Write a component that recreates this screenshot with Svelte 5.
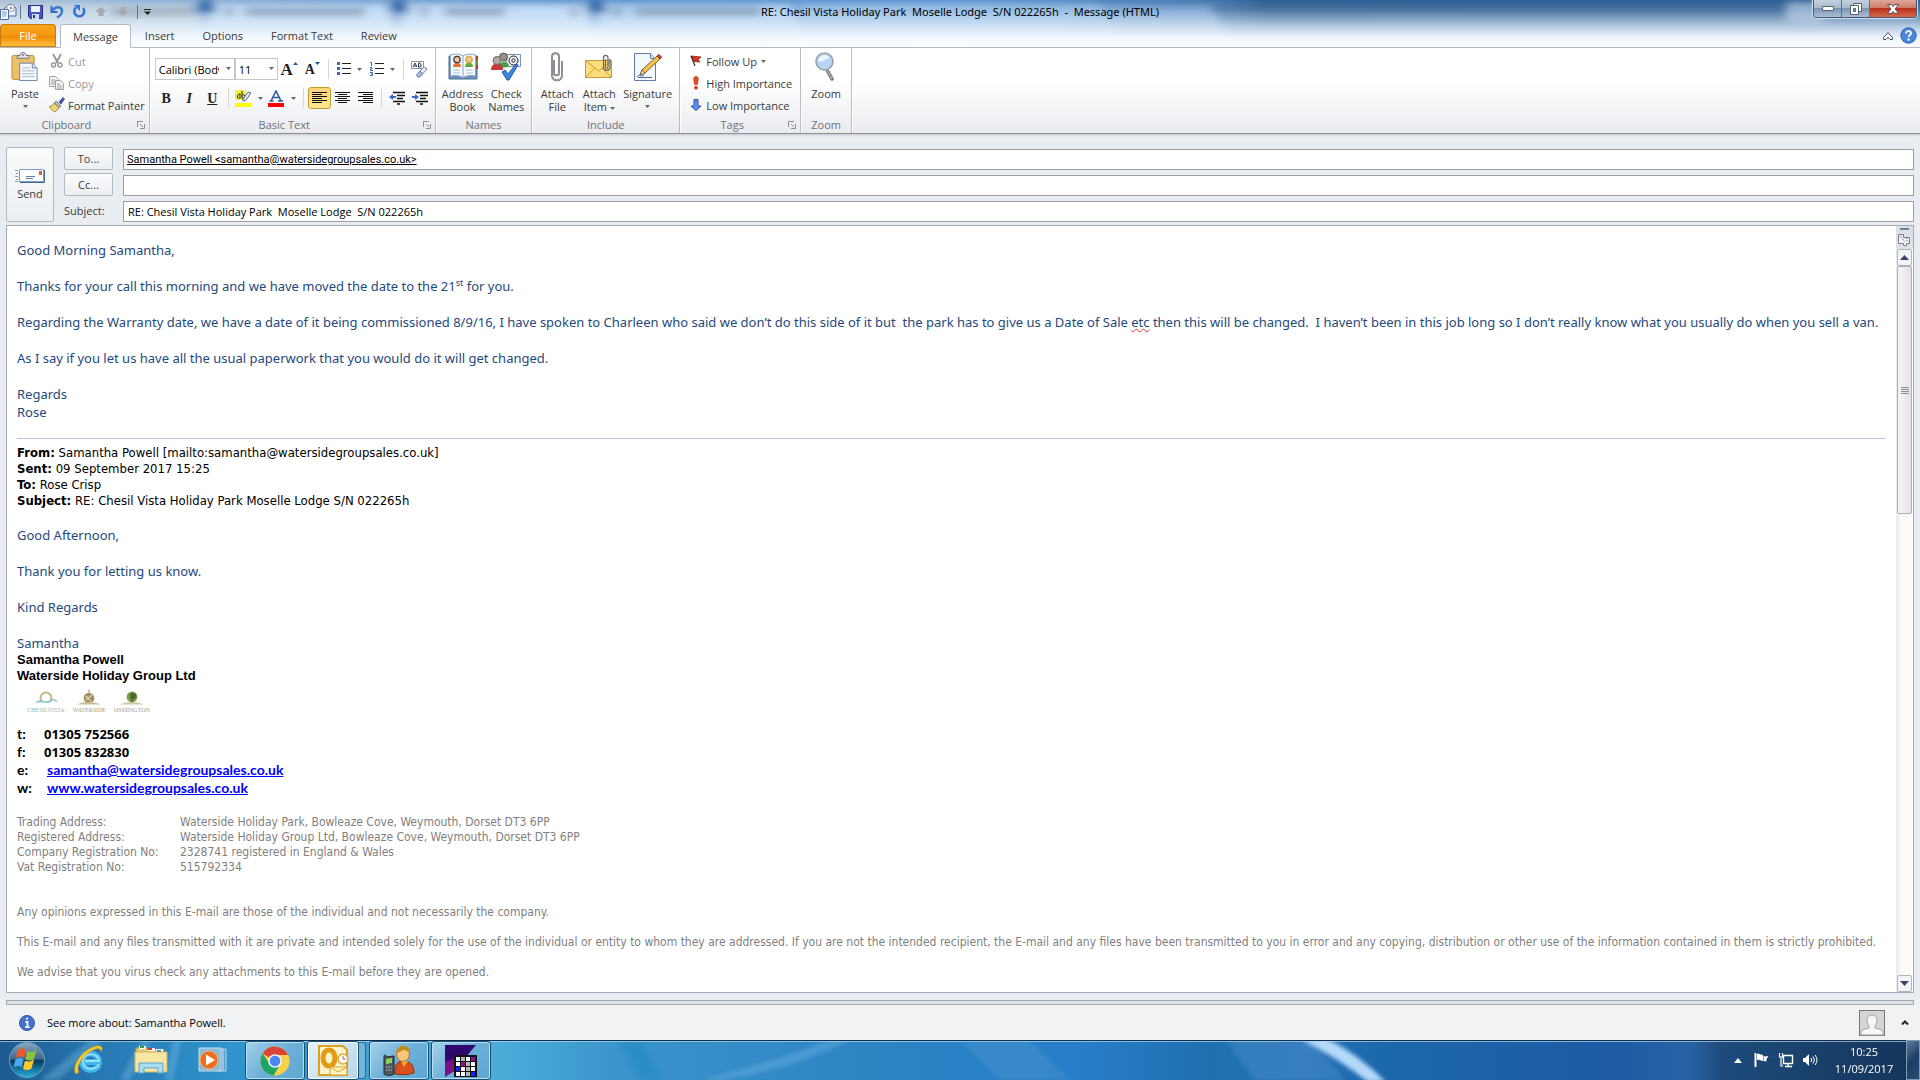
<script lang="ts">

  // Message Data:
  let font: string = $state('Calibri (Body)');
  let fontSize: string = $state('11');
  let to: string = $state('Samantha Powell <samantha@watersidegroupsales.co.uk>');
  let cc: string = $state('');
  let subject: string = $state('RE: Chesil Vista Holiday Park  Moselle Lodge  S/N 022265h');

  const tabs: string[] = ['Insert', 'Options', 'Format Text', 'Review'];

  const contacts = [
    { key: 't:', value: '01305 752566' },
    { key: 'f:', value: '01305 832830' },
    { key: 'e:', value: 'samantha@watersidegroupsales.co.uk', href: 'mailto:samantha@watersidegroupsales.co.uk' },
    { key: 'w:', value: 'www.watersidegroupsales.co.uk', href: 'http://www.watersidegroupsales.co.uk' },
  ];

  const company = [
    ['Trading Address:', 'Waterside Holiday Park, Bowleaze Cove, Weymouth, Dorset DT3 6PP'],
    ['Registered Address:', 'Waterside Holiday Group Ltd, Bowleaze Cove, Weymouth, Dorset DT3 6PP'],
    ['Company Registration No:', '2328741 registered in England & Wales'],
    ['Vat Registration No:', '515792334'],
  ];

</script>

<!-- #################################################################################################### -->

{#snippet arrow()}
  <svg class="arrow" width="5" height="3" viewBox="0 0 5 3"><path d="M0 0h5L2.5 3z" fill="#666" /></svg>
{/snippet}

{#snippet launcher()}
  <button class="launcher" aria-label="More options">
    <svg width="8" height="8" viewBox="0 0 8 8" fill="none" stroke="#8d929a"><path d="M.5 6V.5H6M3 3l3 3M7.5 3v4.5H3" /></svg>
  </button>
{/snippet}

{#snippet lines(widths: number[], align: string)}
  <svg width="15" height="14" viewBox="0 0 15 14" fill="#111">
    {#each widths as w, i}
      <rect x={align === 'left' ? 0 : align === 'right' ? 15 - w : (15 - w) / 2} y={i * 2 + 1} width={w} height="1" />
    {/each}
  </svg>
{/snippet}

<div class="window">

  <!-- Title Bar -->
  <header>
    <svg class="glass" viewBox="0 0 1920 48" preserveAspectRatio="none" aria-hidden="true">
      <defs>
        <linearGradient id="glassBase">
          <stop offset="0" stop-color="#a9bfd4" />
          <stop offset=".07" stop-color="#8fb2d6" />
          <stop offset=".3" stop-color="#5d92cd" />
          <stop offset=".5" stop-color="#5f96d2" />
          <stop offset=".63" stop-color="#4677ad" />
          <stop offset=".66" stop-color="#2c5c90" />
          <stop offset="1" stop-color="#2d5e94" />
        </linearGradient>
        <linearGradient id="glassFade" x2="0" y2="1">
          <stop offset="0" stop-color="#fff" stop-opacity="0" />
          <stop offset=".2" stop-color="#e2eefb" stop-opacity=".15" />
          <stop offset=".55" stop-color="#e6f1fc" stop-opacity=".72" />
          <stop offset=".8" stop-color="#f6faff" stop-opacity=".97" />
          <stop offset="1" stop-color="#fbfdff" />
        </linearGradient>
        <filter id="soft" x="-20%" y="-80%" width="140%" height="260%"><feGaussianBlur stdDeviation="5 3" /></filter>
      </defs>
      <rect width="1920" height="48" fill="url(#glassBase)" />
      <g filter="url(#soft)">
        <path d="M-10 4h200l16 34H-10z" fill="#bfd0df" />
        <path d="M215 4h170l14 34H203zM408 4h176l12 34H398z" fill="#b9d6f2" />
        <path d="M602 4h190l12 34H594z" fill="#a5c9ec" />
        <path d="M800 4h300l14 34H800z" fill="#9ec4ea" opacity=".7" />
        <path d="M1100 6h110l20 34h-130z" fill="#87aedb" opacity=".7" />
        <path d="M200 0h12l6 14h-22zM393 0h12l6 14h-22zM590 0h12l6 14h-22z" fill="#2c64a8" />
        <path d="M1786 2h38v20h-38z" fill="#86a6c8" />
        <path d="M225 13h8M245 13h120M420 13h8M445 13h60M570 13h8M612 13h10M635 13h125" stroke="#5f7a98" stroke-width="9" opacity=".7" />
        <path d="M110 13h85" stroke="#7c90a4" stroke-width="9" opacity=".7" />
      </g>
      <rect width="1920" height="48" fill="url(#glassFade)" />
    </svg>

    <div class="titleRow">
      <div class="quick">
        <svg width="17" height="17" viewBox="0 0 17 17">
          <path d="M4.500 5L10 1l6 4v8H5z" fill="#e8eef7" stroke="#4a6ea0" />
          <path d="M7 2h7v6H7z" fill="#fff" stroke="#8aa0bd" /><path d="M10 4h2v2h-2z" fill="#d7683c" />
          <path d="M.500 6.500h8v10h-8z" fill="#f7fafe" stroke="#4a6ea0" /><path d="M2 9h5M2 11h5M2 13h4" stroke="#7d9ac2" />
        </svg>
        <i class="bar"></i>
        <button aria-label="Save">
          <svg width="15" height="15" viewBox="0 0 15 15"><path d="M.5 1.500h14v13h-12l-2-2z" fill="#4a55c8" stroke="#26308a" /><path d="M3 2h9v6H3z" fill="#eef2fb" /><path d="M4 10h7v5H4z" fill="#d5dbea" /><path d="M5 11h2v3H5z" fill="#26308a" /></svg>
        </button>
        <button aria-label="Undo">
          <svg width="15" height="15" viewBox="0 0 15 15"><path d="M1.500 2v6h6" fill="none" stroke="#2f6cc4" stroke-width="2" /><path d="M2 7.500C5 2 12 2 12 7c0 3-2 5-5 6.500" fill="none" stroke="#3b7ad0" stroke-width="2.500" /></svg>
        </button>
        <button aria-label="Redo">
          <svg width="15" height="15" viewBox="0 0 15 15"><path d="M4 3.500A5 5 0 1 0 11 4" fill="none" stroke="#2f74d6" stroke-width="2.500" /><path d="M2 1h6v6z" fill="#2f74d6" /></svg>
        </button>
        <button aria-label="Previous item">
          <svg width="12" height="9" viewBox="0 0 12 9"><path d="M6 0l6 5H8.500v4h-5V5H0z" fill="#a6a9b0" /></svg>
        </button>
        <button aria-label="Next item">
          <svg width="12" height="9" viewBox="0 0 12 9"><path d="M6 9l6-5H8.500V0h-5v4H0z" fill="#a6a9b0" /></svg>
        </button>
        <i class="bar"></i>
        <button class="thin" aria-label="Customize toolbar">
          <svg width="7" height="6" viewBox="0 0 7 6"><path d="M0 0h7v1H0zM0 2.500h7L3.500 6z" fill="#222" /></svg>
        </button>
      </div>
      <h1>{subject}  -  Message (HTML)</h1>
      <div class="controls">
        <button aria-label="Minimize"><svg width="12" height="5" viewBox="0 0 12 5"><path d="M.5.500h11v4H.5z" fill="#fff" stroke="#5a6270" /></svg></button>
        <button aria-label="Restore"><svg width="12" height="12" viewBox="0 0 12 12" fill="#fff" stroke="#5a6270"><path d="M3.500.500h8v8h-8z" /><path d="M.5 2.500h8v9h-8z" /><path d="M3.500 5.500h2v3h-2z" fill="#7e93ac" /></svg></button>
        <button class="close" aria-label="Close"><svg width="12" height="10" viewBox="0 0 12 10"><path d="M.5.500h3.500L6 2.500 8 .500h3.500L8.200 5l3.300 4.500H8L6 7.500l-2 2H.500L3.800 5z" fill="#fff" stroke="#5b4a58" /></svg></button>
      </div>
    </div>

    <nav>
      <button class="file">File</button>
      <button class="active">Message</button>
      {#each tabs as tab}
        <button>{tab}</button>
      {/each}
      <span class="spacer"></span>
      <button class="help" aria-label="Minimize the ribbon"><svg width="10" height="8" viewBox="0 0 10 8"><path d="M.5 5.500L5 .700l4.500 4.800v2H7L5 5.200 3 7.500H.500z" fill="#fff" stroke="#444c58" /></svg></button>
      <button class="help" aria-label="Help">
        <svg width="17" height="17" viewBox="0 0 17 17"><circle cx="8.500" cy="8.500" r="7.700" fill="#4a86dc" stroke="#2a5cae" /><path d="M6 6.500c0-3.500 5.500-3 5 0-.3 1.500-2.300 1.700-2.300 3.500" fill="none" stroke="#fff" stroke-width="1.800" /><circle cx="8.600" cy="12.500" r="1.200" fill="#fff" /></svg>
      </button>
    </nav>
  </header>

  <!-- Ribbon -->
  <section class="ribbon">

    <div class="group">
      <div class="items">
        <button class="big paste">
          <svg width="28" height="31" viewBox="0 0 28 31">
            <rect x=".5" y="3.500" width="23" height="25" rx="2" fill="#ecc06a" stroke="#bd8c3a" />
            <path d="M6 6.500V3.500h3c0-4 6-4 6 0h3v3z" fill="#dfe2e7" stroke="#6f7681" /><circle cx="12" cy="3" r="1" fill="#6f7681" />
            <path d="M8.500 11.500h13l5 5v13h-18z" fill="#f6f9fd" stroke="#6b84ac" /><path d="M21.500 11.500v5h5" fill="#cfdcee" stroke="#6b84ac" />
            <path d="M11 16.500h8M11 19.500h13M11 22.500h13M11 25.500h13" stroke="#a3b6d2" />
          </svg>
          <span>Paste</span>{@render arrow()}
        </button>
        <div class="stack">
          <button class="small" disabled>
            <svg width="16" height="16" viewBox="0 0 16 16" fill="none" stroke="#999"><path d="M4 1l5 9M12 1L7 10" stroke-width="2" /><circle cx="4.500" cy="12" r="2" stroke-width="1.500" /><circle cx="11" cy="12" r="2" stroke-width="1.500" /></svg>Cut
          </button>
          <button class="small" disabled>
            <svg width="16" height="16" viewBox="0 0 16 16" fill="#f2f2f2" stroke="#a0a0a0"><path d="M.5 1.500h6l3 3v7h-9z" /><path d="M2 5h4M2 7h4M2 9h4" /><path d="M6.500 5.500h5l3 3v6h-8z" /><path d="M8 9h3M8 11h5M8 13h5" /></svg>Copy
          </button>
          <button class="small">
            <svg width="16" height="16" viewBox="0 0 16 16"><path d="M10 5l4-4.500 1.500 1.500L12 7z" fill="#4456c0" stroke="#2d3a80" stroke-width=".7" /><path d="M7 4l5 5-2 1.500L5.500 6z" fill="#bcc3cf" stroke="#555" stroke-width=".7" /><path d="M5 6l5 5-4 4C4 14 1 12 .500 9.500 3 9 4 8 5 6z" fill="#efd472" stroke="#90762a" stroke-width=".8" /></svg>Format Painter
          </button>
        </div>
      </div>
      <footer><span>Clipboard</span>{@render launcher()}</footer>
    </div>

    <div class="group">
      <div class="items format">
        <div class="tools">
          <label class="pick fontName">
            <select aria-label="Font" bind:value={font}><option>Calibri (Body)</option></select>{@render arrow()}
          </label>
          <label class="pick fontSize">
            <select aria-label="Font size" bind:value={fontSize}><option>11</option></select>{@render arrow()}
          </label>
          <button class="tool serif grow" aria-label="Grow font">A<svg width="5" height="3" viewBox="0 0 5 3"><path d="M0 3h5L2.500 0z" fill="#2a4f9c" /></svg></button>
          <button class="tool serif shrink" aria-label="Shrink font">A<svg width="5" height="3" viewBox="0 0 5 3"><path d="M0 0h5L2.500 3z" fill="#2a4f9c" /></svg></button>
          <i class="sep"></i>
          <button class="tool drop" aria-label="Bullets">
            <svg width="14" height="14" viewBox="0 0 14 14"><path d="M0 0h3v3H0zM0 5h3v3H0zM0 10h3v3H0z" fill="#4168ad" /><path d="M5 1h9v1H5zM5 6h9v1H5zM5 11h9v1H5z" fill="#222" /></svg>{@render arrow()}
          </button>
          <button class="tool drop" aria-label="Numbering">
            <svg width="14" height="14" viewBox="0 0 14 14"><path d="M0 .500h1.500V4M0 5.500h2V7H.500v1.500H3M0 10.500h2.500v3H0M1 12h1" fill="none" stroke="#4168ad" /><path d="M5 1h9v1H5zM5 6h9v1H5zM5 11h9v1H5z" fill="#222" /></svg>{@render arrow()}
          </button>
          <i class="sep"></i>
          <button class="tool" aria-label="Clear formatting">
            <svg width="17" height="17" viewBox="0 0 17 17"><path d="M.5.500h12v7H.500z" fill="#fff" stroke="#8592a8" /><path d="M2 6l2-4 2 4M3 5h2M7.500 2v4H9c2 0 1.500-2 0-2 1.500 0 1-2-.500-2z" fill="none" stroke="#26334e" /><path d="M9 10l4-4 3 2-4.500 5z" fill="#e6edf8" stroke="#6d82ab" /><path d="M9 10l2.500 3L9 16H6.500L5.500 14z" fill="#a9bde0" stroke="#6d82ab" /></svg>
          </button>
        </div>
        <div class="tools">
          <button class="tool serif"><b>B</b></button>
          <button class="tool serif"><em>I</em></button>
          <button class="tool serif"><u>U</u></button>
          <i class="sep"></i>
          <button class="tool drop" aria-label="Highlight colour">
            <svg width="17" height="17" viewBox="0 0 17 17"><path d="M0 0h11v10H0z" fill="#f4f04a" /><path d="M5 4.500c-3-2-4 5-.500 3.500M5 3.500V8.500M7 1v7.500M7 5c4-2 3 5 0 3" fill="none" stroke="#222" /><path d="M8 9l5-7 3 1-5 7-3 1z" fill="#dfe6f2" stroke="#5b6f95" /><path d="M0 13h16v4H0z" fill="#ffff00" /></svg>{@render arrow()}
          </button>
          <button class="tool drop" aria-label="Font colour">
            <svg width="17" height="17" viewBox="0 0 17 17"><path d="M3 11L8 1l5 10M5 7.500h6M1.500 11h4M10 11h5" fill="none" stroke="#355a9f" stroke-width="1.600" /><path d="M0 13h16v4H0z" fill="#f00" /></svg>{@render arrow()}
          </button>
          <i class="sep"></i>
          <button class="tool on" aria-label="Align left">{@render lines([15, 10, 15, 10, 15, 10], 'left')}</button>
          <button class="tool" aria-label="Centre">{@render lines([15, 9, 15, 9, 15, 9], 'center')}</button>
          <button class="tool" aria-label="Align right">{@render lines([15, 10, 15, 10, 15, 10], 'right')}</button>
          <i class="sep"></i>
          <button class="tool" aria-label="Decrease indent">
            <svg width="16" height="14" viewBox="0 0 16 14"><path d="M4 1.500h12M8 4.500h8M8 7.500h6M4 10.500h12M8 13h3" stroke="#111" stroke-width="1.300" /><path d="M0 6l4-3v2h3v2H4v2z" fill="#3568c4" /></svg>
          </button>
          <button class="tool" aria-label="Increase indent">
            <svg width="16" height="14" viewBox="0 0 16 14"><path d="M4 1.500h12M8 4.500h8M8 7.500h6M4 10.500h12M8 13h3" stroke="#111" stroke-width="1.300" /><path d="M7 6L3 3v2H0v2h3v2z" fill="#3568c4" /></svg>
          </button>
        </div>
      </div>
      <footer><span>Basic Text</span>{@render launcher()}</footer>
    </div>

    <div class="group">
      <div class="items">
        <button class="big">
          <svg width="30" height="30" viewBox="0 0 30 30">
            <path d="M1 4h28v23H1z" fill="#6f91be" stroke="#4b6a96" /><path d="M2.500 3C7 1.500 12 2 15 4c3-2 8-2.500 12.500-1v21C23 23 18 23.500 15 25.500 12 23.500 7 23 2.500 24z" fill="#f7fafe" stroke="#8ba3c4" /><path d="M15 4v21" stroke="#8ba3c4" />
            <path d="M29 4v4M29 13v4" stroke="#c0392b" stroke-width="2" /><path d="M29 8v5" stroke="#5a9e3e" stroke-width="2" />
            <path d="M5 15c0-6 8-6 8 0z" fill="#e8742c" /><circle cx="9" cy="7.500" r="3.200" fill="#f3c49b" stroke="#3c3c3c" stroke-width="1.300" />
            <path d="M17 15c0-6 8-6 8 0z" fill="#5cae3b" /><circle cx="21" cy="7.500" r="3.200" fill="#f3c49b" stroke="#d2a83a" stroke-width="1.300" />
            <path d="M5 18h7M5 21h7M18 18h7M18 21h7" stroke="#a9bcd8" />
          </svg>
          <span>Address<br>Book</span>
        </button>
        <button class="big">
          <svg width="30" height="30" viewBox="0 0 30 30">
            <path d="M15.500 2.500h14v12h-14z" fill="#eef3fa" stroke="#7e95b8" /><circle cx="22.500" cy="8.500" r="4.500" fill="none" stroke="#222" /><circle cx="22.500" cy="8.500" r="1.700" fill="none" stroke="#222" />
            <path d="M8 16c0-8 10-8 10-1z" fill="#43a046" /><circle cx="12.500" cy="5" r="4" fill="#9a8f88" stroke="#555" />
            <path d="M0 18c0-9 12-9 12 0z" fill="#c8373c" /><circle cx="6" cy="8.500" r="4" fill="#b7aaa2" stroke="#666" />
            <path d="M11 20l3-2 3 4 8-10 2 1-9 15h-2z" fill="#3f86e0" stroke="#1f5cb0" />
          </svg>
          <span>Check<br>Names</span>
        </button>
      </div>
      <footer><span>Names</span></footer>
    </div>

    <div class="group">
      <div class="items include">
        <button class="big">
          <svg width="14" height="30" viewBox="0 0 14 30"><path d="M4 8v13c0 3 5 3 5 0V5c0-5-7-5-7 0v18c0 7 10 7 10 0V9" fill="none" stroke="#666c74" stroke-width="2" /><path d="M4 8v13c0 3 5 3 5 0V5c0-5-7-5-7 0v18c0 7 10 7 10 0V9" fill="none" stroke="#e2e5e9" stroke-width=".6" /></svg>
          <span>Attach<br>File</span>
        </button>
        <button class="big">
          <svg width="28" height="30" viewBox="0 0 28 30"><path d="M.5 8.500h26v17H.500z" fill="#fbdd7b" stroke="#c99a3b" /><path d="M1 9l12.500 10L26 9M1 25l9-9M26 25l-9-9" fill="none" stroke="#c99a3b" /><path d="M20.500 7v8c0 2 2.500 2 2.500 0V6c0-3.500-4.500-3.500-4.500 0v9c0 4.500 6.500 4.500 6.500 0V7" fill="none" stroke="#5f6874" stroke-width="1.200" /></svg>
          <span>Attach<br>Item {@render arrow()}</span>
        </button>
        <button class="big">
          <svg width="30" height="30" viewBox="0 0 30 30"><path d="M1.500 1.500h16l5 5v22h-21z" fill="#f4f8fd" stroke="#5d7cab" /><path d="M17.500 1.500v5h5" fill="#d4e0f0" stroke="#5d7cab" /><path d="M4 25c3-4 4 1 7-2M5 25.500h14" fill="none" stroke="#4a6aa0" /><path d="M7 23l2-5L24 4l3 3-15 14z" fill="#f6c14a" stroke="#7c6232" /><path d="M7 23l2-5 3 3z" fill="#f2dfc0" stroke="#5c4a2a" stroke-width=".7" /><path d="M24 4l2-1.500L28.500 5 27 7z" fill="#d2453c" stroke="#8d2f2a" /></svg>
          <span>Signature</span>{@render arrow()}
        </button>
      </div>
      <footer><span>Include</span></footer>
    </div>

    <div class="group">
      <div class="items">
        <div class="stack tags">
          <button class="small"><svg width="12" height="12" viewBox="0 0 12 12"><path d="M1 1l10 1-3 2.500L10 7 4 6.500z" fill="#d8341f" stroke="#8e1f12" stroke-width=".8" /><path d="M1 1l4 10" stroke="#333" stroke-width="1.200" /></svg>Follow Up {@render arrow()}</button>
          <button class="small"><svg width="12" height="14" viewBox="0 0 12 14"><path d="M6 .500c3 0 2.500 2.500 1.500 8h-3C3.500 3 3 .500 6 .500z" fill="#ea4a22" stroke="#b23113" stroke-width=".6" /><circle cx="6" cy="11.700" r="1.900" fill="#e2401c" /></svg>High Importance</button>
          <button class="small"><svg width="12" height="12" viewBox="0 0 12 12"><path d="M4 .500h4V7h3l-5 4.500L1 7h3z" fill="#5f8ff0" stroke="#2a4fae" /></svg>Low Importance</button>
        </div>
      </div>
      <footer><span>Tags</span>{@render launcher()}</footer>
    </div>

    <div class="group">
      <div class="items">
        <button class="big">
          <svg width="22" height="30" viewBox="0 0 22 30"><path d="M12 18l5 9" stroke="#6d7278" stroke-width="3.500" stroke-linecap="round" /><path d="M12 18l5 9" stroke="#b9bec4" stroke-width="1.200" /><circle cx="9.500" cy="9.500" r="8.500" fill="#b9d5f5" stroke="#9ba1a9" stroke-width="1.600" /><path d="M3 9c1-6 9-8 12-3-4 0-7 5-12 3z" fill="#eef6ff" /></svg>
          <span>Zoom</span>
        </button>
      </div>
      <footer><span>Zoom</span></footer>
    </div>

  </section>

  <!-- Address Fields -->
  <form class="fields" onsubmit={(e) => e.preventDefault()}>
    <button class="send">
      <svg width="30" height="14" viewBox="0 0 30 14"><path d="M4.500.500h24v12h-24z" fill="#fff" stroke="#7d9cc6" /><path d="M5 13.500h24.500V1" fill="none" stroke="#46668f" /><path d="M24 2h3v4h-3z" fill="#e25b3c" /><path d="M11 7.500h9M11 9.500h7" stroke="#5b7bb0" /><path d="M0 1.500h3M1 4.500h2M0 7.500h3M1 10.500h2M0 12.500h3" stroke="#8a9dbb" /></svg>
      Send
    </button>
    <button id="toLabel" type="button" class="who">To...</button>
    <input class="recipient" aria-labelledby="toLabel" bind:value={to} spellcheck="false">
    <button id="ccLabel" type="button" class="who">Cc...</button>
    <input aria-labelledby="ccLabel" bind:value={cc}>
    <label for="subject">Subject:</label>
    <input id="subject" bind:value={subject} spellcheck="false">
  </form>

  <!-- Message Body -->
  <main>
    <article>
      <div class="reply">
        <p>Good Morning Samantha,</p>
        <p>Thanks for your call this morning and we have moved the date to the 21<sup>st</sup> for you.</p>
        <p>Regarding the Warranty date, we have a date of it being commissioned 8/9/16, I have spoken to Charleen who said we don’t do this side of it but &nbsp;the park has to give us a Date of Sale <span class="typo">etc</span> then this will be changed. &nbsp;I haven’t been in this job long so I don’t really know what you usually do when you sell a van.</p>
        <p>As I say if you let us have all the usual paperwork that you would do it will get changed.</p>
        <p>Regards<br>Rose</p>
      </div>

      <div class="quoted">
        <b>From:</b> Samantha Powell [mailto:samantha@watersidegroupsales.co.uk]<br>
        <b>Sent:</b> 09 September 2017 15:25<br>
        <b>To:</b> Rose Crisp<br>
        <b>Subject:</b> RE: Chesil Vista Holiday Park Moselle Lodge S/N 022265h
      </div>

      <div class="reply">
        <p>Good Afternoon,</p>
        <p>Thank you for letting us know.</p>
        <p>Kind Regards</p>
        <p>Samantha</p>
      </div>

      <div class="sender">Samantha Powell<br>Waterside Holiday Group Ltd</div>

      <!-- Park Logos -->
      <div class="logos">
        <figure class="chesil">
          <svg width="28" height="17" viewBox="0 0 26 15" fill="none"><path d="M9 11a5 5 0 1 1 8 0" stroke="#c9b785" stroke-width="2" /><path d="M4 12c5-3 9 2 13-1 3-3 4-1 6 0" stroke="#86c2cc" stroke-width="1.500" /></svg>
          <figcaption>CHESILVISTA</figcaption>
        </figure>
        <figure>
          <svg width="28" height="17" viewBox="0 0 26 15"><path d="M13 0v3" stroke="#a58f63" /><circle cx="13" cy="8" r="5" fill="#a58f63" /><path d="M10 10l6-5M10 6l5 5" stroke="#e9e0cb" /><path d="M2 14c7-3 14-3 22 0z" fill="#cbbd98" /></svg>
          <figcaption>WATERSIDE</figcaption>
        </figure>
        <figure>
          <svg width="28" height="17" viewBox="0 0 26 15"><circle cx="13" cy="7" r="5" fill="#7d9a4e" /><circle cx="14" cy="6" r="3" fill="#4c6d2c" /><path d="M13 7v6" stroke="#5a4a2c" /><path d="M2 14c7-3 14-3 22 0z" fill="#cfc6a2" /></svg>
          <figcaption>OSMINGTON</figcaption>
        </figure>
      </div>

      <dl class="contacts">
        {#each contacts as { key, value, href }}
          <dt>{key}</dt>
          <dd>{#if href}<a {href}>{value}</a>{:else}<span>{value}</span>{/if}</dd>
        {/each}
      </dl>

      <dl class="company">
        {#each company as [key, value]}
          <dt>{key}</dt>
          <dd>{value}</dd>
        {/each}
      </dl>

      <div class="legal">
        <p>Any opinions expressed in this E-mail are those of the individual and not necessarily the company.</p>
        <p>This E-mail and any files transmitted with it are private and intended solely for the use of the individual or entity to whom they are addressed. If you are not the intended recipient, the E-mail and any files have been transmitted to you in error and any copying, distribution or other use of the information contained in them is strictly prohibited.</p>
        <p>We advise that you virus check any attachments to this E-mail before they are opened.</p>
      </div>
    </article>

    <div class="scrollbar">
      <div class="split">
        <svg width="14" height="18" viewBox="0 0 14 18"><path d="M2 0h9v2H2z" fill="#777f8c" /><path d="M.5 6.500h5v3h6v6h-3v2h-3v-2h-5z" fill="#f4f5f7" stroke="#777f8c" /><path d="M2 8l5 6M9 10v3" stroke="#555" stroke-dasharray="1" /></svg>
      </div>
      <button aria-label="Scroll up"><svg width="9" height="5" viewBox="0 0 9 5"><path d="M0 5h9L4.500 0z" fill="#3a4468" /></svg></button>
      <div class="track">
        <div class="thumb"><svg width="8" height="7" viewBox="0 0 8 7"><path d="M0 .500h8M0 2.500h8M0 4.500h8M0 6.500h8" stroke="#8b8f95" /></svg></div>
      </div>
      <button aria-label="Scroll down"><svg width="9" height="5" viewBox="0 0 9 5"><path d="M0 0h9L4.500 5z" fill="#3a4468" /></svg></button>
    </div>
  </main>

  <!-- People Pane -->
  <aside>
    <div class="splitter"></div>
    <div class="people">
      <svg width="16" height="16" viewBox="0 0 16 16"><circle cx="8" cy="8" r="7.500" fill="#4573cc" stroke="#3158a8" /><path d="M8 2.800v2M6.500 7H8.500v5M6 12.200h4.500" stroke="#fff" stroke-width="1.800" fill="none" /></svg>
      <span>See more about: Samantha Powell.</span>
      <svg class="avatar" width="26" height="26" viewBox="0 0 26 26"><rect x=".5" y=".5" width="25" height="25" fill="#d5d5d7" stroke="#777" /><path d="M2 25v-3c1-3 5-3 8-4v-2c-3-4-3-11 3-11s6 7 3 11v2c3 1 7 1 8 4v3z" fill="#f7f7f8" stroke="#a2a2a6" /></svg>
      <button aria-label="Expand"><svg width="8" height="5" viewBox="0 0 8 5"><path d="M1 4.500l3-3 3 3" fill="none" stroke="#222" stroke-width="2" /></svg></button>
    </div>
  </aside>

  <!-- Taskbar -->
  <div class="taskbar">
    <svg class="glass" viewBox="0 0 1920 40" preserveAspectRatio="none" aria-hidden="true">
      <defs>
        <linearGradient id="taskBase">
          <stop offset="0" stop-color="#1c5a90" />
          <stop offset=".05" stop-color="#2777b2" />
          <stop offset=".12" stop-color="#2f93cc" />
          <stop offset=".255" stop-color="#4cadda" />
          <stop offset=".33" stop-color="#3992ca" />
          <stop offset=".45" stop-color="#2d85c4" />
          <stop offset=".56" stop-color="#277ec8" />
          <stop offset=".63" stop-color="#1f70b1" />
          <stop offset=".68" stop-color="#2873b8" />
          <stop offset=".72" stop-color="#1b67ac" />
          <stop offset=".84" stop-color="#1d5ba5" />
          <stop offset=".88" stop-color="#2862a4" />
          <stop offset=".897" stop-color="#1e4b7c" />
          <stop offset="1" stop-color="#143459" />
        </linearGradient>
        <filter id="soften"><feGaussianBlur stdDeviation="2" /></filter>
      </defs>
      <rect width="1920" height="40" fill="url(#taskBase)" />
      <g filter="url(#soften)">
        <path d="M40 40L90 0h14L58 40zM120 40L142 0h10L130 40zM165 40l8-40h8l-8 40z" fill="#8dd0ea" opacity=".3" />
        <path d="M617 0l25 40h20L640 0z" fill="#1f86bd" opacity=".4" /><path d="M700 40Q780 20 830 0h20Q790 30 720 40z" fill="#8cc8ee" opacity=".3" />
        <path d="M960 0l40 40h70L1030 0zM1225 0l30 40h90L1310 0z" fill="#62a5dc" opacity=".25" />
        <path d="M1302 0q36 18 66 42h18Q1358 14 1326-2z" fill="#b4d9fa" />
      </g>
      <path d="M0 .500h1920" stroke="#0c2f50" /><path d="M0 1.500h1920" stroke="#c4e2f4" opacity=".65" />
    </svg>

    <button class="orb" aria-label="Start">
      <svg width="38" height="38" viewBox="0 0 38 38">
        <defs><linearGradient id="orb" x2="0" y2="1"><stop offset="0" stop-color="#8fa9bd" /><stop offset=".48" stop-color="#3b6488" /><stop offset=".5" stop-color="#0b3557" /><stop offset="1" stop-color="#25b1dc" /></linearGradient></defs>
        <circle cx="19" cy="19" r="17.500" fill="url(#orb)" stroke="#6d9fc0" />
        <path d="M10 9c3-2 6-2 8 0l-2 8c-2-2-5-2-8 0z" fill="#ef5a28" /><path d="M19.500 10c3 2 6 1 9-1l-2.500 9c-3 2-6 2-8.500 0z" fill="#8bc53f" />
        <path d="M7.500 18.500c3-2 6-2 8 0l-2 8c-2-2-5-2-8 0z" fill="#4aa8ec" /><path d="M17 19.500c3 2 6 1 9-1l-2.500 9c-3 2-6 2-8.500 0z" fill="#fcc92c" />
      </svg>
    </button>
    <button class="pin" aria-label="Internet Explorer">
      <svg width="32" height="32" viewBox="0 0 32 32"><path d="M26 21c-3 7-17 7-17-4 0-10 17-10 17 1H11" fill="none" stroke="#3fb5ee" stroke-width="6" /><path d="M26 20c-3 7-16 7-16-3 0-9 16-9 16 0H12" fill="none" stroke="#9be0fa" stroke-width="2" /><path d="M3 30c-5-6 4-22 17-27 8-3 11 0 8 5 0-4-3-4-8-2C10 11 2 23 6 28z" fill="#f6c92f" stroke="#cb9414" stroke-width=".6" /></svg>
    </button>
    <button class="pin" aria-label="Windows Explorer">
      <svg width="34" height="30" viewBox="0 0 34 30"><path d="M2 3h10l2 2h16v19H2z" fill="#e7cb79" stroke="#b2913f" /><path d="M5 1h7v3H5zM14 3h7v3h-7zM22 4h7v3h-7z" fill="#fff" /><path d="M6 1h4v2H6z" fill="#3a9b45" /><path d="M14 3h4v2h-4z" fill="#d23b2d" /><path d="M23 5h4v2h-4z" fill="#3c7fd0" /><path d="M1 7h32v20H1z" fill="#f8e7a4" stroke="#cfb05c" /><path d="M5 28V18h24v10h-5v-5H10v5z" fill="#a8dcf2" stroke="#5aa5cc" /></svg>
    </button>
    <button class="pin" aria-label="Media Player">
      <svg width="30" height="26" viewBox="0 0 30 26"><path d="M20 2h8v22h-8z" fill="#5b9cc6" stroke="#b5d9ee" /><path d="M1 1h22v23H1z" fill="#8abbd9" stroke="#c3dfee" /><path d="M25 2v22" stroke="#d3e9f5" /><circle cx="11" cy="13" r="9" fill="#ee6c1c" stroke="#f9b37c" /><path d="M8 7.500v11l9-5.500z" fill="#fff" /></svg>
    </button>
    <button class="task" aria-label="Chrome">
      <svg width="30" height="30" viewBox="0 0 30 30"><circle cx="15" cy="15" r="14.500" fill="#fbd04b" /><path d="M15 15L2.500 7.500A14.500 14.500 0 0 1 28 9H15z" fill="#da4437" /><path d="M15 15l-1 14.500A14.500 14.500 0 0 1 2.500 7.500L10 18z" fill="#1fa463" /><path d="M13.500 29.500L20 19l-5 2-4-2z" fill="#1fa463" /><circle cx="15" cy="15" r="6.800" fill="#fff" /><circle cx="15" cy="15" r="5.400" fill="#4a87f0" /></svg>
    </button>
    <button class="task lit" aria-label="Outlook">
      <svg width="32" height="32" viewBox="0 0 32 32"><path d="M2 1h24l4 4v25H2z" fill="#fdf3cd" stroke="#d9a11e" stroke-width="2" /><ellipse cx="12" cy="13" rx="6" ry="8" fill="none" stroke="#e39a16" stroke-width="5" /><path d="M13 22h17v8H13z" fill="#fff3c4" stroke="#d9a11e" /><path d="M13 22l8 5 9-5" fill="none" stroke="#d9a11e" /><circle cx="26" cy="14" r="5" fill="#fff" stroke="#e0a838" stroke-width="1.500" /><path d="M26 11v3h3" fill="none" stroke="#a9741a" /></svg>
    </button>
    <i class="pile"></i>
    <button class="task" aria-label="Communicator">
      <svg width="32" height="32" viewBox="0 0 32 32"><path d="M12 29c-1-12 5-13 9-13s10 2 10 12c-6 2-14 2-19 1z" fill="#d9501e" stroke="#8f300e" /><path d="M18 16l3 6 4-6z" fill="#f2b23c" /><ellipse cx="20" cy="9" rx="6.500" ry="7.500" fill="#f6c67e" stroke="#a77a1f" /><path d="M13.500 8C13-1 27-2 27 8c-3-1-4-3-6-3s-4 2-7.500 3z" fill="#c08c1d" /><path d="M1 13c0-2 0-3 1-3s1 1 1 2l8-1v18c-3 2-7 2-10 0z" fill="#4f585e" stroke="#23292d" /><path d="M3 14l6-1v5l-6 1z" fill="#86d65e" /><path d="M3 22h6M3 25h6" stroke="#b9c1c6" stroke-dasharray="1.500 1" /></svg>
    </button>
    <button class="task" aria-label="Terminal">
      <svg width="32" height="32" viewBox="0 0 32 32"><path d="M0 0h31L20 13 0 20z" fill="#30066f" /><path d="M0 17l11-4v12L0 32z" fill="#7a0f86" /><path d="M9 10h23v22H9z" fill="#111" /><path d="M11 12h4v4h-4zM21 12h4v4h-4zM11 17h4v4h-4zM26 17h4v4h-4zM16 22h4v4h-4zM11 27h4v4h-4zM16 27h4v4h-4zM26 22h4v4h-4z" fill="#fff" /><path d="M16 12h4v4h-4zM21 17h4v4h-4zM21 22h4v4h-4zM21 27h4v4h-4z" fill="#b5b5b5" /><path d="M26 12h4v4h-4zM16 17h4v4h-4z" fill="#8a138f" /><path d="M11 22h4v4h-4zM26 27h4v4h-4z" fill="#1720ee" /></svg>
    </button>

    <span class="spacer"></span>

    <div class="tray">
      <button aria-label="Show hidden icons"><svg width="8" height="5" viewBox="0 0 8 5"><path d="M0 5h8L4 0z" fill="#fff" /></svg></button>
      <button aria-label="Action centre"><svg width="16" height="16" viewBox="0 0 16 16"><path d="M1.500 1v14" stroke="#fff" stroke-width="2" /><path d="M3 2c3-1 4 1 6 1v6C7 9 6 7 3 8zM9.500 4c2 1 3 0 5 0l-2 3v2c-1 1-2 0-3 0z" fill="#fff" /></svg></button>
      <button aria-label="Network"><svg width="16" height="16" viewBox="0 0 16 16" fill="none" stroke="#fff"><path d="M5.500 3.500h9v8h-9zM7 14.500h7M10 12v2" stroke-width="1.400" /><path d="M1.500 1v4h3V1M3 5v9h2" stroke-width="1.200" /></svg></button>
      <button aria-label="Volume"><svg width="16" height="16" viewBox="0 0 16 16"><path d="M1 6h2l4-4v12L3 10H1z" fill="#fff" /><path d="M9 6q1.500 2 0 4M11 4.500q3 3.500 0 7M13 3q4 5 0 10" fill="none" stroke="#fff" /></svg></button>
      <time datetime="2017-09-11T10:25">10:25<br>11/09/2017</time>
      <button class="desktop" aria-label="Show desktop"></button>
    </div>
  </div>

</div>

<!-- #################################################################################################### -->

<style>

  :global(body) {
    margin: 0;
  }

  .window {
    display: flex;
    flex-direction: column;
    min-height: 100vh;
    font-family: "Open Sans", "Noto Sans", sans-serif;
    font-size: 11px;
    line-height: 13px;
    color: #3b3b3b;
    background: #e9ecf0;
  }

  button, input, select {
    box-sizing: border-box;
    margin: 0;
    padding: 0;
    font: inherit;
    color: inherit;
    background: none;
    border: 0;
    border-radius: 0;
  }

  svg {
    display: block;
    flex-shrink: 0;
  }

  .spacer {
    flex: 1;
  }

  .glass {
    position: absolute;
    inset: 0;
    width: 100%;
    height: 100%;
    z-index: -1;
  }

  /* Title Bar */

  header {
    position: relative;
    isolation: isolate;
    border-bottom: 1px solid #b6bac0;
  }

  .titleRow {
    display: grid;
    grid-template-columns: 1fr auto 1fr;
    align-items: start;
    height: 24px;
  }

  .quick {
    display: flex;
    align-items: center;
    height: 23px;
  }

  .quick button {
    display: flex;
    align-items: center;
    justify-content: center;
    width: 22px;
    height: 22px;
  }

  .quick button.thin {
    width: 12px;
  }

  .quick .bar {
    width: 1px;
    height: 14px;
    margin: 0 3px;
    background: #5f7389;
  }

  h1 {
    margin: 0;
    font-family: "Noto Sans", sans-serif;
    font-size: 11px;
    font-weight: normal;
    line-height: 24px;
    color: #000;
    white-space: pre;
  }

  .controls {
    display: flex;
    justify-self: end;
    margin-right: 3px;
    border: 1px solid #44586f;
    border-top: 0;
    border-radius: 0 0 4px 4px;
    box-shadow: 0 0 1px 1px #d3e3f3;
    overflow: hidden;
  }

  .controls button {
    display: flex;
    align-items: center;
    justify-content: center;
    width: 28px;
    height: 17px;
    border-right: 1px solid #5a6f88;
    background: linear-gradient(#c3d0de, #a6b8cb 50%, #7d96b2 50%, #a9c0d8);
  }

  .controls button.close {
    width: 46px;
    border-right: 0;
    background: linear-gradient(#e0a698, #cf7863 50%, #b8321c 50%, #d8694a);
  }

  nav {
    display: flex;
    height: 23px;
  }

  nav button {
    padding: 0 14px;
  }

  nav button.file {
    width: 56px;
    margin-right: 4px;
    color: #fff;
    background: linear-gradient(#f6a51b, #f59a10 45%, #f08a06 55%, #fdc03c);
    border: 1px solid #c87a12;
    border-radius: 3px 3px 0 0;
  }

  nav button.active {
    height: 24px;
    padding: 0 12px;
    background: #fff;
    border: 1px solid #b6bac0;
    border-bottom-color: #fff;
    border-radius: 3px 3px 0 0;
  }

  nav button.help {
    padding: 0 3px 0 4px;
  }

  /* Ribbon */

  .ribbon {
    display: flex;
    background: linear-gradient(#fff, #fff 40%, #e9ebef);
    border-bottom: 1px solid #8b9097;
    box-shadow: 0 1px 2px #c3c7cd;
  }

  .group {
    display: flex;
    flex-direction: column;
    border-right: 1px solid #b9bdc4;
    box-shadow: 1px 0 #fff;
  }

  .items {
    display: flex;
    height: 66px;
    padding: 2px 4px 0 4px;
  }

  .group footer {
    display: flex;
    height: 17px;
    line-height: 17px;
    color: #6c727c;
  }

  .group footer span {
    flex: 1;
    text-align: center;
  }

  .launcher {
    width: 16px;
    height: 17px;
    display: grid;
    place-items: center;
  }

  .big {
    display: flex;
    flex-direction: column;
    align-items: center;
    min-width: 42px;
    padding: 2px 2px 0 2px;
  }

  .include .big {
    padding: 2px 3px 0 3px;
  }

  .big > svg:first-child {
    height: 30px;
    margin-bottom: 5px;
  }

  .big > .arrow {
    margin-top: 5px;
  }

  .big span .arrow {
    display: inline-block;
    vertical-align: middle;
  }

  .big.paste {
    width: 42px;
    margin-right: 3px;
  }

  .small {
    display: flex;
    align-items: center;
    gap: 3px;
    height: 22px;
    white-space: nowrap;
  }

  .small:disabled {
    color: #999;
  }

  .tags {
    padding: 0 4px 0 6px;
  }

  .tags .small {
    gap: 4px;
  }

  .format {
    flex-direction: column;
    gap: 7px;
    height: 58px;
    padding: 10px 3px 0 5px;
  }

  .tools {
    display: flex;
    align-items: center;
    height: 22px;
  }

  .pick {
    position: relative;
    height: 22px;
  }

  .pick select {
    appearance: none;
    width: 100%;
    height: 22px;
    padding: 0 15px 0 3px;
    color: #000;
    background: #fff;
    border: 1px solid #c3c7cd;
    overflow: hidden;
  }

  .pick .arrow {
    position: absolute;
    top: 9px;
    right: 4px;
  }

  .fontName {
    width: 80px;
  }

  .fontSize {
    width: 43px;
  }

  .tool {
    display: flex;
    align-items: center;
    justify-content: center;
    width: 23px;
    height: 22px;
    color: #222;
  }

  .tool.serif {
    font-family: "Liberation Serif", serif;
    font-size: 14px;
    font-weight: bold;
  }

  .tool.grow {
    font-size: 17px;
  }

  .tool.grow svg, .tool.shrink svg {
    align-self: start;
    margin-top: 4px;
  }

  .tool.drop {
    width: 33px;
    gap: 6px;
  }

  .tool.on {
    background: linear-gradient(#fbd47a, #fde98f);
    border: 1px solid #c29b2e;
    border-radius: 3px;
  }

  .sep {
    width: 1px;
    height: 20px;
    margin: 0 4px;
    background: #d2d5da;
  }

  /* Address Fields */

  .fields {
    display: grid;
    grid-template: repeat(3, 23px) / 48px 49px 1fr;
    gap: 3px 10px;
    align-items: end;
    padding: 13px 6px 3px 6px;
  }

  .send {
    grid-row: span 3;
    display: flex;
    flex-direction: column;
    align-items: center;
    justify-content: center;
    gap: 4px;
    height: 75px;
  }

  .send, .who {
    background: linear-gradient(#fafbfc, #eceff2);
    border: 1px solid #b4b9c0;
    border-radius: 2px;
  }

  .who {
    height: 23px;
  }

  .fields label {
    line-height: 22px;
  }

  .fields input {
    width: 100%;
    height: 21px;
    padding: 0 4px 1px 4px;
    color: #000;
    background: #fff;
    border: 1px solid #9a9ea4;
  }

  .fields input.recipient {
    padding: 0 3px;
    font-family: Roboto, sans-serif;
    text-decoration: underline;
  }

  /* Message Body */

  main {
    flex: 1;
    display: flex;
    margin: 0 6px;
    background: #fff;
    border: 1px solid #a3aab6;
  }

  article {
    flex: 1;
    min-width: 0;
    padding: 15px 10px 4px 10px;
    color: #000;
  }

  .reply {
    font-family: "Noto Sans", sans-serif;
    font-size: 13px;
    line-height: 18px;
    color: #1f497d;
  }

  .reply p {
    margin: 0 0 18px 0;
  }

  .reply p:last-child {
    margin: 0;
  }

  .reply sup {
    font-size: 9px;
    line-height: 1px;
  }

  .typo {
    text-decoration: underline wavy #e33 1px;
    text-decoration-skip-ink: none;
  }

  .quoted {
    margin: 17px 0;
    padding-top: 6px;
    font-family: "DejaVu Sans Condensed", sans-serif;
    font-size: 13px;
    line-height: 16px;
    border-top: 1px solid #b5c4df;
  }

  .sender {
    font-family: "Liberation Sans", sans-serif;
    font-size: 13px;
    font-weight: bold;
    line-height: 16px;
  }

  .logos {
    display: flex;
    gap: 8px;
    height: 36px;
    padding: 5px 0 0 10px;
  }

  figure {
    display: flex;
    flex-direction: column;
    align-items: center;
    margin: 0;
    font-family: "Liberation Serif", serif;
    font-size: 6px;
    line-height: 8px;
    color: #a79c84;
  }

  figure.chesil {
    color: #8fb3ac;
  }

  dl {
    display: grid;
    margin: 0;
  }

  dd {
    margin: 0;
  }

  .contacts {
    grid-template-columns: 27px 1fr;
    grid-auto-rows: 18px;
    font-family: Lato, sans-serif;
    font-size: 14px;
    font-weight: bold;
    line-height: 18px;
  }

  .contacts span {
    font-family: "Open Sans", sans-serif;
    font-size: 13px;
  }

  .contacts a {
    margin-left: 3px;
    color: #0000ff;
  }

  .company, .legal {
    font-family: "DejaVu Sans Condensed", sans-serif;
    font-size: 12px;
    line-height: 15px;
    color: #7f7f7f;
  }

  .company {
    grid-template-columns: 163px 1fr;
    padding: 18px 0 30px 0;
  }

  .legal p {
    margin: 0 0 15px 0;
  }

  .legal p:last-child {
    margin: 0;
  }

  .scrollbar {
    display: flex;
    flex-direction: column;
    width: 17px;
    background: linear-gradient(90deg, #e8e9eb, #fafafa 30%, #fcfcfc);
  }

  .split {
    display: flex;
    justify-content: center;
    height: 21px;
    padding-top: 2px;
    background: #dce1e8;
  }

  .scrollbar button {
    display: grid;
    place-items: center;
    height: 17px;
    margin: 0 1px;
    background: #f3f4f5;
    border: 1px solid #b0b4bb;
    border-radius: 2px;
  }

  .track {
    flex: 1;
    padding: 0 1px;
  }

  .thumb {
    display: grid;
    place-items: center;
    box-sizing: border-box;
    height: 35%;
    background: linear-gradient(90deg, #f5f5f6, #e3e4e6);
    border: 1px solid #a9adb6;
    border-radius: 2px;
  }

  /* People Pane */

  aside {
    margin-top: 7px;
    background: #f1f2f4;
  }

  .splitter {
    height: 3px;
    margin: 0 6px;
    background: #dde1e6;
    border: 1px solid #a3aab6;
  }

  .people {
    display: flex;
    align-items: center;
    gap: 12px;
    height: 35px;
    padding: 0 7px 0 19px;
    color: #000;
  }

  .people .avatar {
    margin-left: auto;
  }

  .people button {
    padding: 4px;
  }

  /* Taskbar */

  .taskbar {
    position: relative;
    isolation: isolate;
    display: flex;
    height: 40px;
  }

  .orb {
    width: 58px;
    padding-left: 8px;
  }

  .pin {
    display: grid;
    place-items: center;
    width: 62px;
  }

  .task {
    display: grid;
    place-items: center;
    width: 60px;
    height: 39px;
    margin: 1px 1px 0 1px;
    background: linear-gradient(135deg, #a5d2ea, #6cb0d8 50%, #5ca8d4);
    border: 1px solid #1c4e74;
    border-radius: 3px;
    box-shadow: inset 0 0 0 1px #b9e0f4;
  }

  .task.lit {
    width: 52px;
    margin-right: 0;
    background: linear-gradient(135deg, #e6f2f9, #b2d6ea);
    box-shadow: inset 0 0 0 1px #fff;
  }

  .pile {
    width: 6px;
    margin: 2px 2px 1px 0;
    background: #74b4d8;
    border: 1px solid #2a6a94;
    border-left: 0;
    border-radius: 0 3px 3px 0;
  }

  .tray {
    display: flex;
    align-items: center;
    color: #fff;
  }

  .tray button {
    display: grid;
    place-items: center;
    width: 24px;
    height: 40px;
  }

  .tray time {
    width: 84px;
    line-height: 17px;
    text-align: center;
  }

  .tray button.desktop {
    width: 14px;
    background: linear-gradient(135deg, #5f7f9f, #1c3e64 50%, #2a4d72);
    border: 1px solid #7d9ab6;
  }

</style>
